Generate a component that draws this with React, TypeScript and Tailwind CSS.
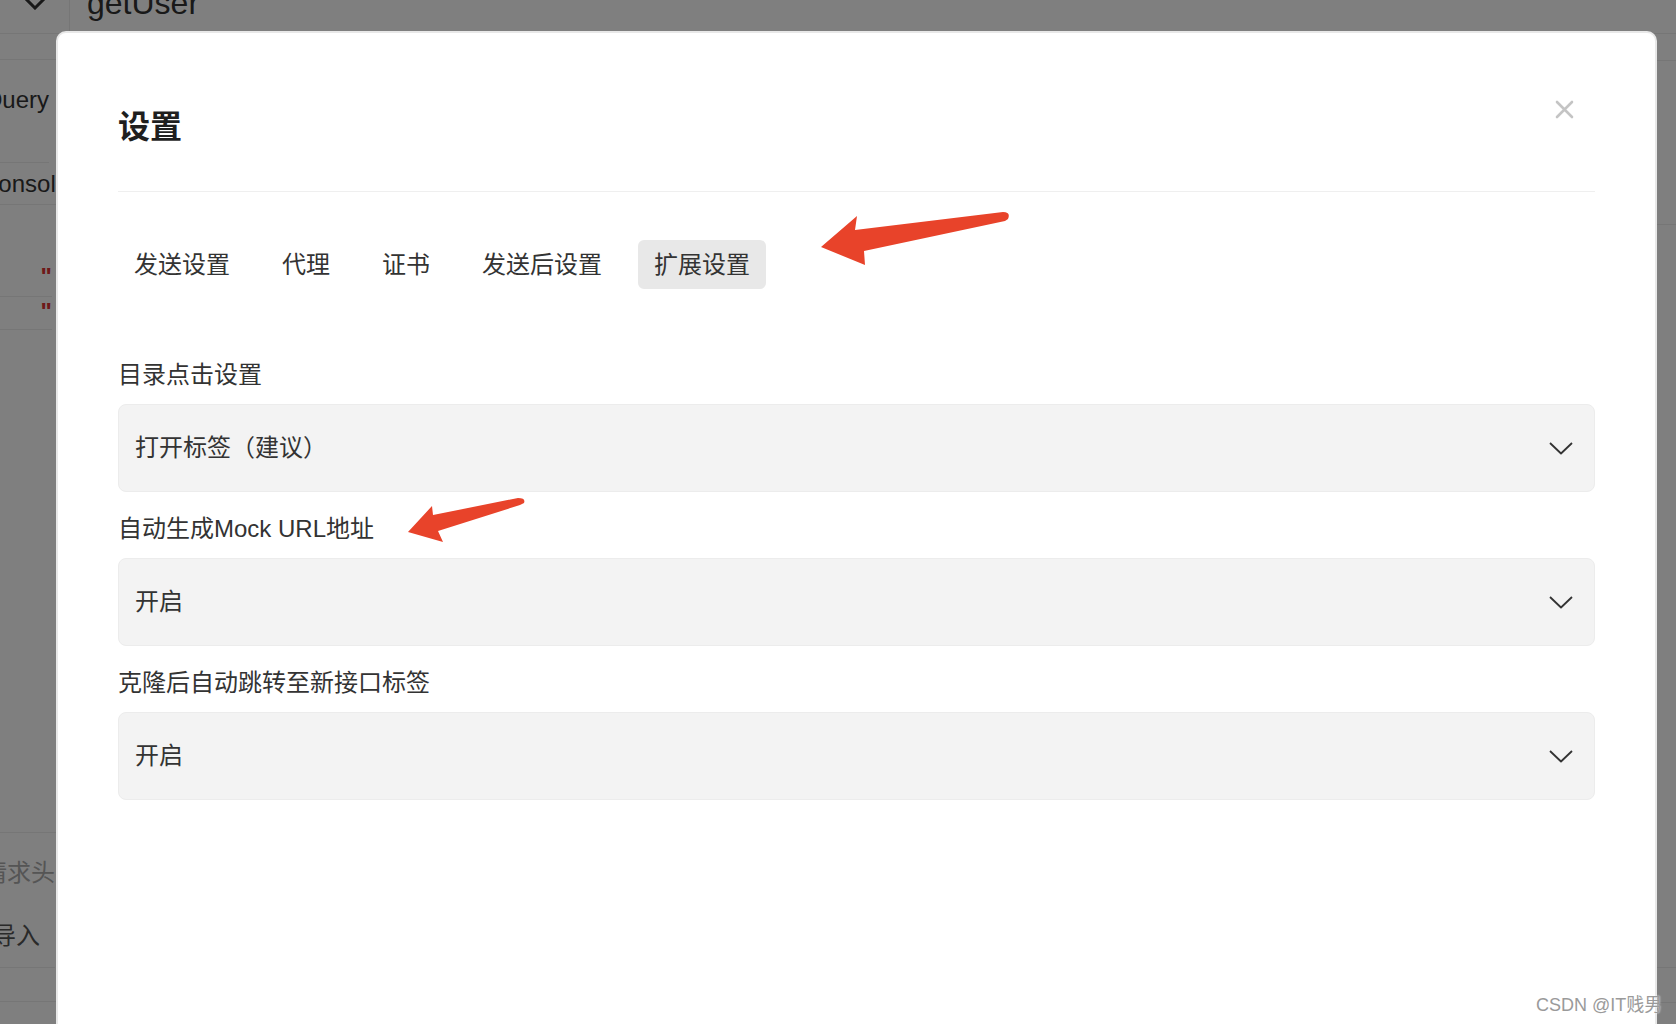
const tabs = ['发送设置', '代理', '证书', '发送后设置', '扩展设置'];

const sections = [
    { label: '目录点击设置', value: '打开标签（建议）' },
    { label: '自动生成Mock URL地址', value: '开启' },
    { label: '克隆后自动跳转至新接口标签', value: '开启' },
];

function Chevron() {
    return (
        <svg width="24" height="13" viewBox="0 0 24 13" fill="none">
            <polyline points="1,1 12,11.5 23,1" stroke="#333" strokeWidth="1.8" strokeLinejoin="round" />
        </svg>
    );
}

function SelectField({ label, value }: { label: string; value: string }) {
    return (
        <div>
            <p className="mb-3 text-[24px] leading-[34px] text-[#333]">{label}</p>
            <div className="flex h-[88px] items-center justify-between rounded-[8px] border border-[#ececec] bg-[#f3f3f3] pl-[16px] pr-[21px]">
                <span className="text-[24px] text-[#333]">{value}</span>
                <Chevron />
            </div>
        </div>
    );
}

function BackgroundApp() {
    return (
        <div className="flex h-full flex-col">
            {/* tab header, mostly scrolled out of view */}
            <div className="flex h-[34px] shrink-0 items-start border-b border-[#ececec]">
                <div className="flex h-full w-[70px] justify-center border-r border-[#ececec]">
                    <svg width="24" height="14" viewBox="0 0 24 14" className="-mt-[4px]" fill="none">
                        <polyline points="2,2 12,12 22,2" stroke="#333" strokeWidth="3" />
                    </svg>
                </div>
                <span className="-mt-[12px] ml-[17px] text-[32px] leading-[30px] text-[#333]">getUser</span>
            </div>
            <div className="flex flex-1">
                <div className="flex w-[600px] flex-col border-r border-[#ececec]">
                    <div className="h-[26px] border-b border-[#ececec]" />
                    <div className="flex h-[103px] w-[49px] justify-end border-b border-[#ececec] pt-[28px]">
                        <span className="whitespace-nowrap text-[24px] leading-[24px] text-[#333]">Query</span>
                    </div>
                    <div className="flex h-[42px] items-center border-b border-[#ececec]">
                        <span className="-ml-[19px] whitespace-nowrap text-[24px] text-[#333]">Console</span>
                    </div>
                    <div className="flex h-[92px] w-[52px] justify-end border-b border-[#ececec] pt-[60px]">
                        <span className="text-[24px] font-bold leading-[24px] text-[#dd3333]">"</span>
                    </div>
                    <div className="flex h-[33px] w-[52px] justify-end border-b border-[#ececec] pt-[3px]">
                        <span className="text-[24px] font-bold leading-[24px] text-[#dd3333]">"</span>
                    </div>
                    <div className="h-[503px] border-b border-[#ececec]" />
                    <div className="flex h-[135px] w-[55px] flex-col items-end gap-[39px] border-b border-[#ececec] pt-[28px]">
                        <span className="whitespace-nowrap text-[24px] leading-[24px] text-[#aaa]">请求头</span>
                        <span className="whitespace-nowrap pr-[15px] text-[24px] leading-[24px] text-[#555]">导入</span>
                    </div>
                    <div className="h-[34px] border-b border-[#ececec]" />
                </div>
                <div className="flex flex-1 flex-col">
                    <div className="h-[27px] border-b border-[#ececec]" />
                    <div className="h-[164px] border-b border-[#ececec]" />
                    <div className="h-[743px] border-b border-[#ececec]" />
                    <div className="h-[35px] border-b border-[#ececec]" />
                </div>
            </div>
        </div>
    );
}

export default function App() {
    const active = '扩展设置';
    return (
        <div
            className="relative h-[1024px] w-[1676px] overflow-hidden bg-white"
            style={{ fontFamily: '"Liberation Sans", "Noto Sans CJK SC", sans-serif' }}
        >
            <BackgroundApp />
            <div className="absolute inset-0 bg-black/50" />

            {/* settings modal */}
            <div className="absolute left-[56px] top-[31px] h-[1040px] w-[1601px] rounded-[10px] border-2 border-[#e8e8e8] bg-white px-[60px] pt-[74px]">
                <button className="absolute right-[81px] top-[67px]">
                    <svg width="19" height="19" viewBox="0 0 19 19" fill="none">
                        <path d="M2 2 L17 17 M17 2 L2 17" stroke="#c4c4c4" strokeWidth="2.6" strokeLinecap="round" />
                    </svg>
                </button>
                <div className="border-b border-[#efefef] pb-[44px]">
                    <h2 className="text-[32px] font-bold leading-[40px] text-[#1f1f1f]">设置</h2>
                </div>
                <div className="mt-[48px] flex gap-5">
                    {tabs.map((t) => (
                        <div
                            key={t}
                            className={
                                t === active
                                    ? 'flex h-[49px] items-center rounded-[6px] bg-[#e8e8e8] px-4 text-[24px] text-[#333]'
                                    : 'flex h-[49px] items-center rounded-[6px] px-4 text-[24px] text-[#333]'
                            }
                        >
                            {t}
                        </div>
                    ))}
                </div>
                <div className="mt-[69px] flex flex-col gap-5">
                    {sections.map((s) => (
                        <SelectField key={s.label} label={s.label} value={s.value} />
                    ))}
                </div>
            </div>

            {/* annotation arrows */}
            <svg className="pointer-events-none absolute inset-0" width="1676" height="1024" viewBox="0 0 1676 1024">
                <path
                    d="M821,247 L857,216 L855,230 L1003,212 Q1011,212 1008,219 L1005,221 L864,251 L865,265 Z"
                    fill="#e8432a"
                />
                <path
                    d="M408,532 L432,506 L433,515 L518,498 Q526,498 524,503 L520,505 L438,531 L443,542 Z"
                    fill="#e8432a"
                />
            </svg>

            <span className="absolute left-[1536px] top-[995px] whitespace-nowrap text-[18px] leading-[20px] text-[#9a9a9a] [text-shadow:0_0_2px_#fff]">
                CSDN @IT贱男
            </span>
        </div>
    );
}
